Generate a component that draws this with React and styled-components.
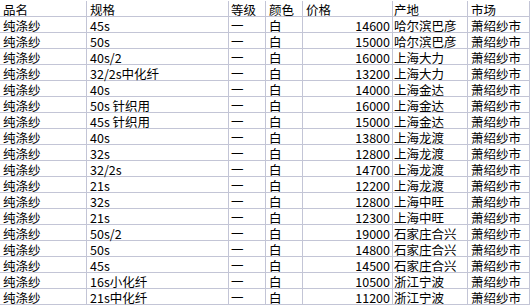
import React from "react";
import styled, { createGlobalStyle } from "styled-components";

const Global = createGlobalStyle`
  html, body { margin: 0; padding: 0; background: #fff; }
  body { font-family: "Noto Sans CJK SC", "Noto Sans", sans-serif; }
`;

const Sheet = styled.div`
  display: grid;
  grid-template-columns: 87px 142px 37px 37px 90px 75px 62px;
  grid-auto-rows: 16px;
  padding-top: 1px;
  width: 531px;
  color: #000;
  font-size: 12.5px;
  line-height: 13px;
`;

const Cell = styled.div`
  box-sizing: border-box;
  border-right: 1px solid #c3c5d6;
  border-bottom: 1px solid #c3c5d6;
  padding: 2px ${(p) => (p.$right ? "2px" : "0")} 0 ${(p) => (p.$right ? "0" : p.$pad || "3px")};
  text-align: ${(p) => (p.$right ? "right" : "left")};
  white-space: nowrap;
`;

const headers = ["品名", "规格", "等级", "颜色", "价格", "产地", "市场"];
const pads = ["3px", "3px", "2px", "3px", "3px", "1px", "3px"];

const rows = [
  ["45s", 14600, "哈尔滨巴彦"],
  ["50s", 15000, "哈尔滨巴彦"],
  ["40s/2", 16000, "上海大力"],
  ["32/2s中化纤", 13200, "上海大力"],
  ["40s", 14000, "上海金达"],
  ["50s 针织用", 16000, "上海金达"],
  ["45s 针织用", 15000, "上海金达"],
  ["40s", 13800, "上海龙渡"],
  ["32s", 12800, "上海龙渡"],
  ["32/2s", 14700, "上海龙渡"],
  ["21s", 12200, "上海龙渡"],
  ["32s", 12800, "上海中旺"],
  ["21s", 12300, "上海中旺"],
  ["50s/2", 19000, "石家庄合兴"],
  ["50s", 14800, "石家庄合兴"],
  ["45s", 14500, "石家庄合兴"],
  ["16s小化纤", 10500, "浙江宁波"],
  ["21s中化纤", 11200, "浙江宁波"],
];

export default function App() {
  return (
    <>
      <Global />
      <Sheet>
        {headers.map((h, i) => (
          <Cell key={h} $pad={pads[i]}>{h}</Cell>
        ))}
        {rows.map(([spec, price, origin], r) => (
          <React.Fragment key={r}>
            <Cell $pad={pads[0]}>纯涤纱</Cell>
            <Cell $pad={pads[1]}>{spec}</Cell>
            <Cell $pad={pads[2]}>一</Cell>
            <Cell $pad={pads[3]}>白</Cell>
            <Cell $right>{price}</Cell>
            <Cell $pad={pads[5]}>{origin}</Cell>
            <Cell $pad={pads[6]}>萧绍纱市</Cell>
          </React.Fragment>
        ))}
      </Sheet>
    </>
  );
}
